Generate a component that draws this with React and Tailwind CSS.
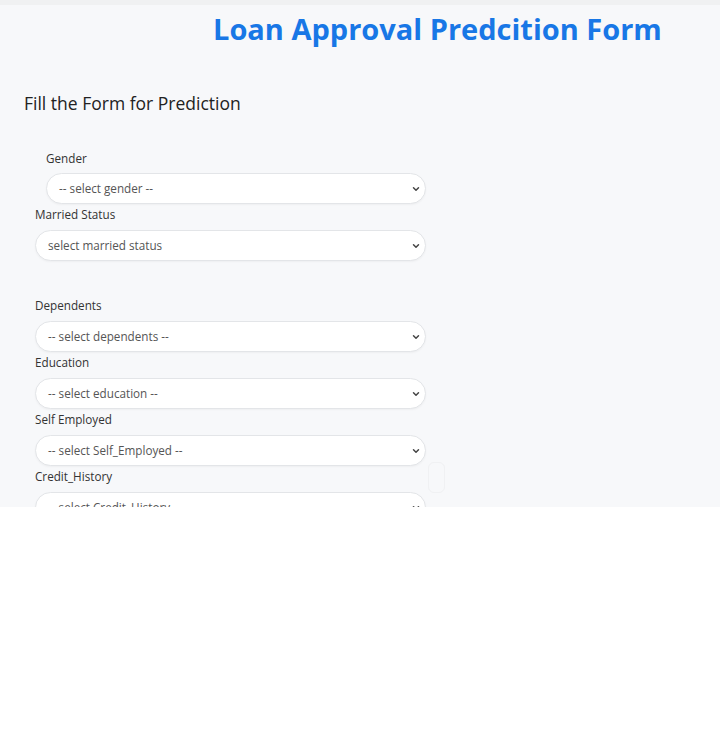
import { ChevronDown } from "lucide-react";

const fields = [
  { label: "Married Status", placeholder: "select married status", gapAfter: true },
  { label: "Dependents", placeholder: "-- select dependents --" },
  { label: "Education", placeholder: "-- select education --" },
  { label: "Self Employed", placeholder: "-- select Self_Employed --" },
  { label: "Credit_History", placeholder: "-- select Credit_History --" },
];

function Select({ placeholder, className = "" }) {
  return (
    <div
      className={`relative flex items-center h-[31px] rounded-full bg-white border border-[#e3e5e8] shadow-[0_1px_2px_rgba(0,0,0,0.04)] pl-3 pr-7 ${className}`}
    >
      <span className="text-[11.7px] text-[#555] whitespace-nowrap">{placeholder}</span>
      <ChevronDown className="absolute right-[4px] top-1/2 -translate-y-1/2 w-[10px] h-[10px] text-[#444]" strokeWidth={3.5} />
    </div>
  );
}

export default function App() {
  return (
    <div className="w-[720px] h-[753px] bg-white" style={{ fontFamily: '"Open Sans", "Noto Sans", sans-serif' }}>
      <div className="h-[507px] overflow-hidden bg-[#f7f8fa] relative">
        <div className="h-[5px] bg-[#f0f1f2]" />
        <h1 className="pl-[213px] mt-[6px] text-[29px] leading-[36px] font-bold text-[#1877e6] whitespace-nowrap">
          Loan Approval Predcition Form
        </h1>
        <h2 className="pl-[24px] mt-[44px] text-[17.5px] leading-[24px] text-[#222]">Fill the Form for Prediction</h2>

        <div className="mt-[34px] w-[426px]">
          <div className="pl-[46px]">
            <div className="text-[11.7px] leading-[18px] text-[#333]">Gender</div>
            <Select placeholder="-- select gender --" className="mt-[6px]" />
          </div>
          <div className="pl-[35px]">
            {fields.map((f) => (
              <div key={f.label} className={f.gapAfter ? "mb-[35px]" : ""}>
                <div className="mt-[1px] text-[11.7px] leading-[18px] text-[#333]">{f.label}</div>
                <Select placeholder={f.placeholder} className="mt-[7px]" />
              </div>
            ))}
          </div>
        </div>

        <div className="absolute left-[428px] top-[462px] w-[17px] h-[31px] rounded-md border border-[#f0f1f3]" />
      </div>
    </div>
  );
}
